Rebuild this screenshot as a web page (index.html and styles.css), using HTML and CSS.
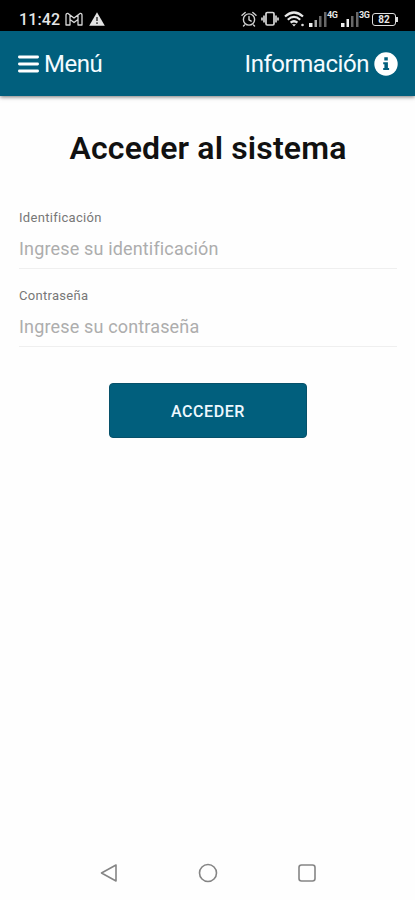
FILE: index.html
```html
<!DOCTYPE html>
<html lang="es">
<head>
<meta charset="utf-8">
<title>Acceder al sistema</title>
<link rel="stylesheet" href="styles.css">
</head>
<body>
<div class="status">
  <div class="status-left">
    <span class="clock">11:42</span>
    <svg class="mail" width="18" height="14" viewBox="0 0 18 14" fill="none" stroke="#d8d8d8" stroke-width="1.3" stroke-linejoin="round"><path d="M1 3.2Q1 1 3 1.4L9 6l6-4.600Q17 1 17 3.200V13h-4V7.500L9 10.500 5 7.500V13H1zM5 3v4.500M13 3v4.500"/></svg>
    <svg class="warn" width="16" height="14" viewBox="0 0 16 14"><path d="M8 .3 15.800 13.700H.2z" fill="#e4e4e4"/><path d="M8 5v4M8 10.300v1.700" stroke="#444" stroke-width="1.600"/></svg>
  </div>
  <div class="status-right">
    <svg width="16" height="16" viewBox="0 0 16 16" fill="none" stroke="#d0d0d0" stroke-width="1.400" stroke-linecap="round"><circle cx="8" cy="8.500" r="5.600"/><path d="M1 4.200 4.200 1.500M15 4.200l-3.200-2.700M8 5.500v3.300l2.200 1.300M3.500 14 2.500 15M12.500 14l1 1"/></svg>
    <svg class="vibrate" width="18" height="16" viewBox="0 0 18 16" fill="none" stroke="#d8d8d8" stroke-width="1.700"><rect x="5" y="1.500" width="8" height="12.500" rx="1.300"/><path d="M3 4.500v7M15 4.500v7M1 6.500v3M17 6.500v3"/></svg>
    <svg class="wifi" width="21" height="16" viewBox="0 0 21 16" fill="none" stroke="#e8e8e8" stroke-width="2.200"><path d="M1 5.500Q10-2.500 19 5.500M3.800 8.700Q10 3.200 16.200 8.700M6.600 11.700Q10 8.800 13.400 11.700"/><path d="M8 13.200h4L10 15.500z" fill="#e8e8e8" stroke="none"/><circle cx="18.500" cy="14" r="1.300" fill="#ddd" stroke="none"/></svg>
    <svg class="signal" width="18" height="16" viewBox="0 0 18 16"><path d="M0 12h3.500v4H0z" fill="#eee"/><path d="M5.500 9h2.500v7H5.500z" fill="#aaa"/><path d="M10 5h2.500v11H10zM15 1h2.500v15H15z" fill="#686868"/></svg>
    <span class="net">4G</span>
    <svg class="signal second" width="18" height="16" viewBox="0 0 18 16"><path d="M0 12h3.500v4H0zM5.500 8h2.500v8H5.500z" fill="#eee"/><path d="M10 5h2.500v11H10zM15 1h2.500v15H15z" fill="#686868"/></svg>
    <span class="net">3G</span>
    <div class="battery">82</div>
  </div>
</div>
<header class="bar">
  <a class="menu"><svg width="21" height="20" viewBox="0 0 21 20" stroke="#fff" stroke-width="2.800" stroke-linecap="round"><path d="M1.400 3h18.200M1.400 10h18.200M1.400 17h18.200"/></svg><span>Menú</span></a>
  <a class="info"><span>Información</span><svg width="24" height="24" viewBox="0 0 24 24"><circle cx="12" cy="12" r="11.700" fill="#fff"/><path d="M10.300 5.300h3.500v3.200h-3.500zM9.200 10.200h4.700v5.700h1.200V18H9.200v-2.100h1.200v-3.600H9.200z" fill="#015f7d"/></svg></a>
</header>
<main>
  <h1>Acceder al sistema</h1>
  <form>
    <div class="field">
      <label for="ident">Identificación</label>
      <input id="ident" type="text" placeholder="Ingrese su identificación">
    </div>
    <div class="field">
      <label for="pass">Contraseña</label>
      <input id="pass" type="password" placeholder="Ingrese su contraseña">
    </div>
    <button type="button">ACCEDER</button>
  </form>
</main>
<nav class="sysnav">
  <svg width="20" height="20" viewBox="0 0 20 20"><path d="M2.500 10 17 2v16z"/></svg>
  <svg width="20" height="20" viewBox="0 0 20 20"><circle cx="10" cy="10" r="8.500"/></svg>
  <svg width="20" height="20" viewBox="0 0 20 20"><rect x="2" y="2" width="16" height="16" rx="2.500"/></svg>
</nav>
</body>
</html>
```
FILE: styles.css
```css
* { box-sizing: border-box; }
body {
  margin: 0;
  height: 900px;
  display: flex;
  flex-direction: column;
  overflow: hidden;
  background: #fefefe;
  font-family: Roboto, sans-serif;
}
.status {
  height: 31px;
  padding: 7px 17px 0 19px;
  display: flex;
  justify-content: space-between;
  background: #000;
  color: #e6e6e6;
}
.status-left, .status-right { display: flex; align-items: center; height: 24px; }
.clock { font-size: 16px; font-weight: 500; letter-spacing: .1px; width: 46px; }
.warn { margin-left: 6px; }
.vibrate { margin-left: 4px; }
.wifi { margin-left: 5px; }
.signal { margin-left: 4px; }
.signal.second { margin-left: 2px; }
.net { width: 12px; height: 17px; font-size: 9px; line-height: 9px; font-weight: 700; letter-spacing: -.3px; }
.battery {
  position: relative;
  width: 24px;
  height: 13px;
  margin: 0 2px 0 1px;
  border: 1.5px solid #ddd;
  border-radius: 3px;
  font-size: 10px;
  font-weight: 700;
  line-height: 11px;
  text-align: center;
}
.battery::after {
  content: "";
  position: absolute;
  right: -3px;
  top: 3px;
  width: 2px;
  height: 5px;
  background: #ddd;
}
.bar {
  height: 65px;
  padding: 0 17px 0 18px;
  display: flex;
  align-items: center;
  justify-content: space-between;
  background: #015f7d;
  color: #f4fbff;
  font-size: 24px;
  letter-spacing: -.45px;
  box-shadow: 0 1px 4px rgba(0, 0, 0, .55);
}
.menu, .info { display: flex; align-items: center; }
.menu { gap: 5px; }
.info { gap: 5px; }
main { flex: 1; padding: 0 18px 0 19px; }
h1 {
  margin: 32px 0 41px;
  font-size: 32px;
  line-height: 40px;
  font-weight: 600;
  letter-spacing: .15px;
  text-align: center;
  color: #111;
}
.field { height: 78px; padding-top: 1px; }
label {
  display: block;
  height: 27px;
  font-size: 13px;
  line-height: 16px;
  letter-spacing: .3px;
  color: #777;
}
input {
  display: block;
  width: 100%;
  height: 32px;
  padding: 0 0 9px;
  border: 0;
  border-bottom: 1px solid #efefef;
  outline: 0;
  background: none;
  font: 18px/22px Roboto, sans-serif;
  letter-spacing: .16px;
}
input::placeholder { color: #adadad; opacity: 1; }
button {
  display: block;
  width: 198px;
  height: 55px;
  margin: 18px auto 0 90px;
  padding: 1px 0 0;
  border: 1px solid #07516a;
  border-radius: 4px;
  background: #015f7d;
  color: #eef8ff;
  font: 500 16px Roboto, sans-serif;
  letter-spacing: .55px;
}
.sysnav {
  height: 55px;
  padding: 0 98px 0 99px;
  display: flex;
  align-items: center;
  justify-content: space-between;
}
.sysnav svg { fill: none; stroke: #858585; stroke-width: 1.6; stroke-linejoin: round; }
```
